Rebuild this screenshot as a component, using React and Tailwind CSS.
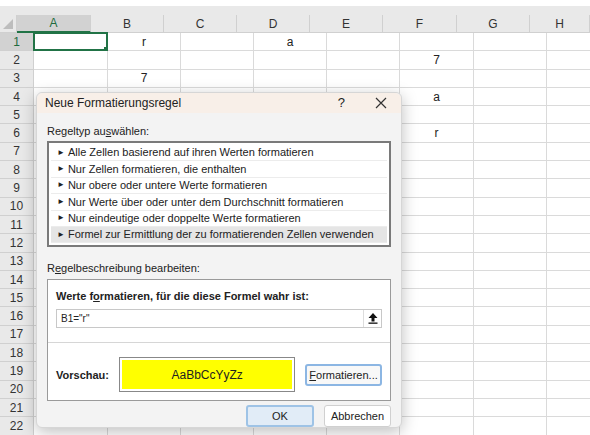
const cols = [["A",74],["B",73],["C",73],["D",73],["E",73],["F",74],["G",73],["H",60]];
const data = {1:{B:"r",D:"a"},2:{F:"7"},3:{B:"7"},4:{F:"a"},6:{F:"r"}};
const items = [
  "Alle Zellen basierend auf ihren Werten formatieren",
  "Nur Zellen formatieren, die enthalten",
  "Nur obere oder untere Werte formatieren",
  "Nur Werte über oder unter dem Durchschnitt formatieren",
  "Nur eindeutige oder doppelte Werte formatieren",
  "Formel zur Ermittlung der zu formatierenden Zellen verwenden",
];
export default function App(){
  const rows = Array.from({length:22},(_,i)=>i+1);
  return (
    <div className="relative w-[590px] h-[435px] overflow-hidden bg-[#e9e9e9] text-[11px] text-[#222] whitespace-nowrap" style={{fontFamily:'"Liberation Sans",Arial,sans-serif'}}>
      <div className="h-[6px] bg-white"></div>
      <div className="h-[9px]"></div>
      <div className="flex h-[18px] text-[12px]">
        <div className="w-[34px] border-r border-b border-[#d0d0d0] relative">
          <div className="absolute right-[3px] bottom-[3px] w-0 h-0 border-l-[10px] border-l-transparent border-b-[10px] border-b-[#bdbdbd]"></div>
        </div>
        {cols.map(([c,w])=>(
          <div key={c} style={{width:w}} className={`shrink-0 flex items-center justify-center border-r border-b border-[#d0d0d0] ${c==="A"?"bg-[#d2d2d2] text-[#1e6b3e] border-b-2 border-b-[#217346]":"text-[#333]"}`}>{c}</div>
        ))}
      </div>
      {rows.map(r=>(
        <div key={r} className="flex h-[18.3px] text-[12px]">
          <div className={`w-[34px] shrink-0 flex items-center justify-center border-r border-b border-[#d0d0d0] ${r===1?"bg-[#d2d2d2] text-[#1e6b3e]":"text-[#333]"}`}>{r}</div>
          {cols.map(([c,w])=>(
            <div key={c} style={{width:w}} className="shrink-0 bg-white border-r border-b border-[#dadada] flex items-center justify-center relative">
              {data[r]?.[c]}
              {r===1&&c==="A"&&<div className="absolute -inset-[1px] border-2 border-[#217346]"><div className="absolute -right-[3px] -bottom-[3px] w-[5px] h-[5px] bg-[#217346]"></div></div>}
            </div>
          ))}
        </div>
      ))}
      <div className="absolute left-[36px] top-[92px] w-[366px] h-[336px] bg-[#f3f3f3] rounded-[6px] border border-[#d6d6d6] shadow-[0_4px_16px_rgba(0,0,0,0.25)] flex flex-col">
        <div className="h-[27px] bg-[#f8efe8] rounded-t-[6px] flex items-center pl-[8px] pr-[14px] text-[12px]">
          <span className="flex-1">Neue Formatierungsregel</span>
          <span className="mr-[30px] text-[13px]">?</span>
          <svg width="12" height="12" viewBox="0 0 12 12" stroke="#333" strokeWidth="1.2"><path d="M1 1L11 11M11 1L1 11"/></svg>
        </div>
        <div className="px-[10px] pt-[10px] flex flex-col">
          <div className="mb-[2px]">Regeltyp au<u>s</u>wählen:</div>
          <div className="border-2 border-[#7a7a7a] bg-white p-[2px]">
            {items.map((t,i)=>(
              <div key={i} className={`h-[16.4px] flex items-center pl-[6px] border-b border-[#ececec] ${i===5?"bg-[#e5e5e5]":""}`}>
                <span className="text-[8px] mr-[3px]">►</span>{t}
              </div>
            ))}
          </div>
          <div className="mt-[13px] mb-[2px]">R<u>e</u>gelbeschreibung bearbeiten:</div>
          <div className="border border-[#9a9a9a] bg-white">
            <div className="px-[8px] pt-[8px] pb-[14px] border-b border-[#d6d6d6]">
              <div className="font-bold mb-[5px]">Werte f<u>o</u>rmatieren, für die diese Formel wahr ist:</div>
              <div className="h-[19px] border border-[#c8c8c8] flex items-center pl-[4px] text-[10px]">
                <span className="flex-1">B1="r"</span>
                <div className="w-[18px] h-[17px] border-l border-[#ddd] flex items-center justify-center">
                  <svg width="10" height="11" viewBox="0 0 10 11" fill="#111"><path d="M5 0L9.5 5H6.5V8.5H3.5V5H0.5Z"/><rect x="0.5" y="9.5" width="9" height="1.3"/></svg>
                </div>
              </div>
            </div>
            <div className="flex items-center px-[8px] pt-[14px] pb-[8px]">
              <span className="font-bold w-[66px]">Vorschau:</span>
              <div className="w-[183px] h-[35px] border border-[#888] p-[2px]">
                <div className="w-full h-full bg-[#ffff00] flex items-center justify-center text-[12px]">AaBbCcYyZz</div>
              </div>
              <div className="ml-[10px] w-[80px] h-[22px] border-2 border-[#8cb6e3] rounded-[3px] bg-[#f8f8f8] flex items-center justify-center"><u>F</u>ormatieren...</div>
            </div>
          </div>
          <div className="flex justify-end gap-[10px] mt-[4px]">
            <div className="w-[68px] h-[22px] bg-[#e1ecf7] border-2 border-[#9ec3e6] rounded-[3px] flex items-center justify-center">OK</div>
            <div className="w-[67px] h-[22px] bg-white border border-[#d0d0d0] rounded-[3px] flex items-center justify-center">Abbrechen</div>
          </div>
        </div>
      </div>
    </div>
  );
}
